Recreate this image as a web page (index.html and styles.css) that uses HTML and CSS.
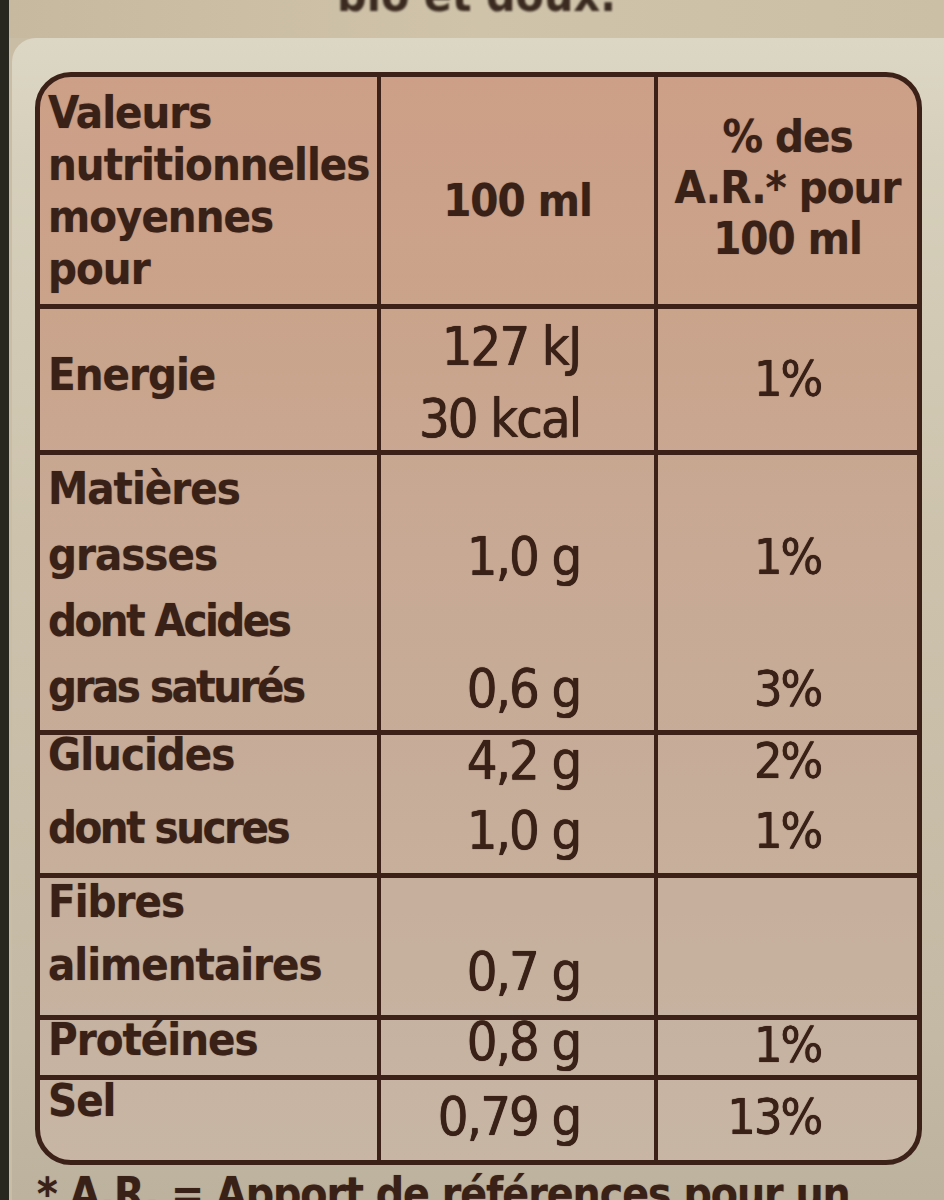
FILE: index.html
```html
<!DOCTYPE html>
<html lang="fr">
<head>
<meta charset="utf-8">
<title>Valeurs nutritionnelles</title>
<link rel="stylesheet" href="styles.css">
</head>
<body>
<div class="page">
  <div class="top-strip"><div class="top-text">bio et doux.</div></div>
  <div class="panel">
    <div class="table">
      <div class="row r-head">
        <div class="cell c1 head1">
          <div class="ln">Valeurs</div>
          <div class="ln">nutritionnelles</div>
          <div class="ln">moyennes</div>
          <div class="ln">pour</div>
        </div>
        <div class="cell c2 head2"><div class="ln">100 ml</div></div>
        <div class="cell c3 head3">
          <div class="ln">% des</div>
          <div class="ln">A.R.* pour</div>
          <div class="ln">100 ml</div>
        </div>
      </div>

      <div class="row r-energie">
        <div class="cell c1"><div class="ln">Energie</div></div>
        <div class="cell c2"><div class="ln num">127 kJ</div><div class="ln num">30 kcal</div></div>
        <div class="cell c3"><div class="ln num">1%</div></div>
      </div>

      <div class="row r-mat">
        <div class="cell c1">
          <div class="ln">Matières</div>
          <div class="ln">grasses</div>
          <div class="ln small">dont Acides</div>
          <div class="ln small">gras saturés</div>
        </div>
        <div class="cell c2">
          <div class="ln"></div><div class="ln num">1,0 g</div><div class="ln"></div><div class="ln num">0,6 g</div>
        </div>
        <div class="cell c3">
          <div class="ln"></div><div class="ln num">1%</div><div class="ln"></div><div class="ln num">3%</div>
        </div>
      </div>

      <div class="row r-glu">
        <div class="cell c1"><div class="ln">Glucides</div><div class="ln small">dont sucres</div></div>
        <div class="cell c2"><div class="ln num">4,2 g</div><div class="ln num">1,0 g</div></div>
        <div class="cell c3"><div class="ln num">2%</div><div class="ln num">1%</div></div>
      </div>

      <div class="row r-fib">
        <div class="cell c1"><div class="ln">Fibres</div><div class="ln">alimentaires</div></div>
        <div class="cell c2"><div class="ln num">0,7 g</div></div>
        <div class="cell c3"></div>
      </div>

      <div class="row r-prot">
        <div class="cell c1"><div class="ln">Protéines</div></div>
        <div class="cell c2"><div class="ln num">0,8 g</div></div>
        <div class="cell c3"><div class="ln num">1%</div></div>
      </div>

      <div class="row r-sel">
        <div class="cell c1"><div class="ln">Sel</div></div>
        <div class="cell c2"><div class="ln num">0,79 g</div></div>
        <div class="cell c3"><div class="ln num">13%</div></div>
      </div>
    </div>
    <div class="foot">* A.R. = Apport de références pour un</div>
  </div>
</div>
</body>
</html>
```
FILE: styles.css
```css
html, body {
  margin: 0;
  padding: 0;
}
body {
  width: 944px;
  height: 1200px;
  overflow: hidden;
  background: #c3b8a3;
  font-family: "DejaVu Sans Condensed", "DejaVu Sans", sans-serif;
  font-stretch: condensed;
  font-weight: bold;
  color: #3a2117;
}
.page {
  height: 1200px;
  border-left: 9px solid #27261f;
  display: flex;
  flex-direction: column;
  background: #c9bda5;
}
.top-strip {
  flex-shrink: 0;
  height: 38px;
  overflow: hidden;
  display: flex;
  justify-content: center;
  background: linear-gradient(90deg, #c7b99f, #cfc3aa 50%, #cbbfa6);
}
.top-text {
  font-size: 46px;
  line-height: 46px;
  margin-top: -28px;
  margin-left: 0;
  color: #3a2a20;
  filter: blur(1px);
}
.panel {
  flex: 1 0 auto;
  margin-left: 3px;
  border-top-left-radius: 24px;
  background: linear-gradient(180deg, #dcd7c5 0px, #d6cfbb 120px, #cdc3ad 500px, #c4b9a4 1000px, #bdb29e 1160px);
  padding: 34px 22px 0 23px;
  display: flex;
  flex-direction: column;
}
.table {
  border: 5px solid #3c2118;
  border-radius: 36px;
  overflow: hidden;
  background: linear-gradient(180deg, #cd9f87 0px, #caa38b 230px, #c8a893 420px, #c6ad99 700px, #c6b19f 900px, #c8b6a5 1090px);
}
.row {
  display: grid;
  grid-template-columns: 337px 277px 1fr;
  border-bottom: 5px solid #3c2118;
  box-sizing: border-box;
}
.row:last-child {
  border-bottom: none;
}
.cell {
  display: flex;
  flex-direction: column;
  font-size: 45px;
  letter-spacing: -1px;
}
.c2, .c3 {
  border-left: 4px solid #3c2118;
}
.c1 {
  padding-left: 8px;
  align-items: flex-start;
}
.c2 {
  align-items: flex-end;
  padding-right: 74px;
}
.c3 {
  align-items: flex-end;
  padding-right: 96px;
}
.ln {
  line-height: 40px;
  height: 40px;
  white-space: nowrap;
  text-shadow: 0 0 1px rgba(58, 33, 23, 0.5);
}
.num {
  font-size: 50px;
  font-weight: normal;
  letter-spacing: -2px;
  text-shadow: 0 0 1px rgba(58, 33, 23, 0.9), 0.5px 0 0 #3a2117;
}
.c2 .num {
  font-size: 54px;
}
.small {
  letter-spacing: -2.5px;
}

/* header */
.r-head { height: 232px; }
.head1 { padding-top: 16px; gap: 12px; }
.head2 { align-items: center; padding-right: 0; padding-top: 104px; }
.head3 { align-items: center; padding-right: 0; padding-top: 40px; gap: 11px; }

/* energie */
.r-energie { height: 146px; }
.r-energie .c1 { padding-top: 46px; }
.r-energie .c2 { padding-top: 18px; gap: 32px; }
.r-energie .c3 { padding-top: 50px; }

/* matieres */
.r-mat { height: 280px; }
.r-mat .c1 { padding-top: 14px; gap: 26px; }
.r-mat .c2, .r-mat .c3 { padding-top: 16px; gap: 26px; }

/* glucides */
.r-glu { height: 143px; }
.r-glu .c1 { padding-top: 0; gap: 33px; }
.r-glu .c2, .r-glu .c3 { padding-top: 6px; gap: 30px; }

/* fibres */
.r-fib { height: 142px; }
.r-fib .c1 { padding-top: 4px; gap: 23px; }
.r-fib .c2 { padding-top: 74px; }

/* proteines */
.r-prot { height: 60px; }
.r-prot .c1 { padding-top: 0; }
.r-prot .c2 { padding-top: 2px; }
.r-prot .c3 { padding-top: 5px; }

/* sel */
.r-sel { height: 80px; }
.r-sel .c1 { padding-top: 1px; }
.r-sel .c2, .r-sel .c3 { padding-top: 17px; }

.foot {
  margin-top: 6px;
  margin-left: 2px;
  font-size: 44px;
  line-height: 46px;
  letter-spacing: -1px;
  white-space: nowrap;
  color: #3a2117;
  text-shadow: 0 0 1px rgba(58, 33, 23, 0.5);
}
```
